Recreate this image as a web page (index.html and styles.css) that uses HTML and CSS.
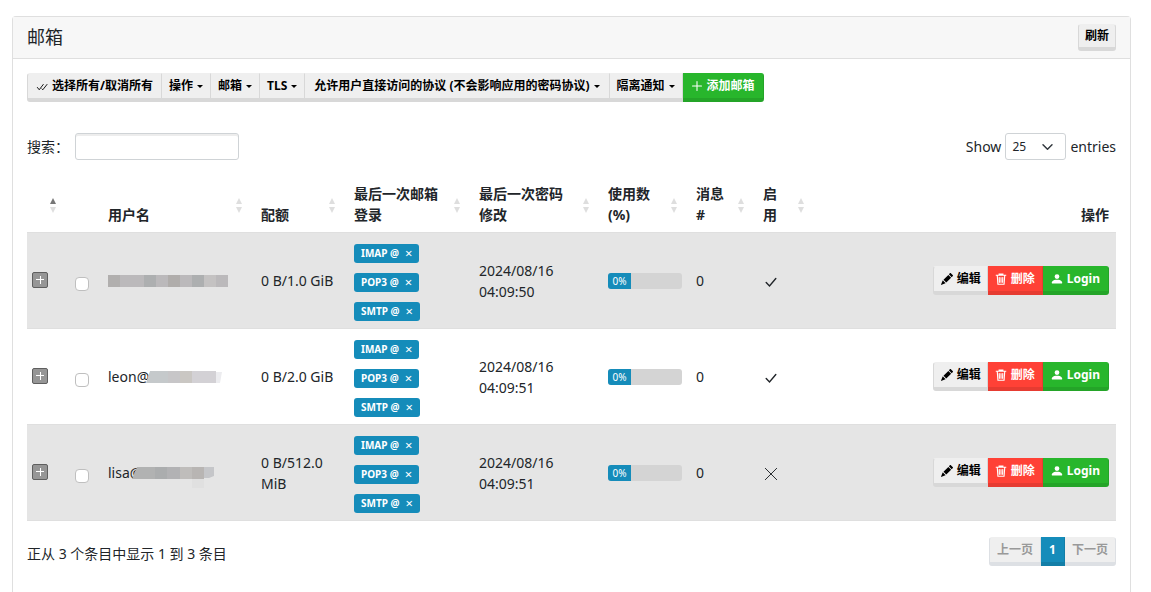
FILE: index.html
```html
<!DOCTYPE html>
<html lang="zh-CN">
<head>
<meta charset="utf-8">
<title>邮箱</title>
<link rel="stylesheet" href="styles.css">
</head>
<body>
<svg class="sprite" aria-hidden="true">
  <symbol id="check-all" viewBox="0 0 16 16"><path d="M1.5 9.5l2.8 3.5L10 5.5M7.5 11.5l1.6 1.5L15 5.5" fill="none" stroke="currentColor" stroke-width="1.2"/></symbol>
  <symbol id="plus" viewBox="0 0 16 16"><path d="M8 2v12M2 8h12" fill="none" stroke="currentColor" stroke-width="1.4" stroke-linecap="round"/></symbol>
  <symbol id="pencil" viewBox="0 0 16 16"><path d="M12.85.15a.5.5 0 0 0-.7 0L10.5 1.8l3.7 3.7 1.65-1.65a.5.5 0 0 0 0-.7zM13.5 6.2L9.8 2.5 3.3 9h.2a.5.5 0 0 1 .5.5v.5h.5a.5.5 0 0 1 .5.5v.5h.5a.5.5 0 0 1 .5.5v.5h.5a.5.5 0 0 1 .5.5v.2zM6 13.7a.5.5 0 0 1 0-.2V13h-.5a.5.5 0 0 1-.5-.5V12h-.5a.5.5 0 0 1-.5-.5V11h-.5a.5.5 0 0 1-.5-.5V10h-.5a.5.5 0 0 1-.2 0l-.1.1-2 5a.5.5 0 0 0 .7.7l5-2z" fill="currentColor"/></symbol>
  <symbol id="trash" viewBox="0 0 16 16"><path d="M1 3h14M5.5 2.5v-1h5v1M3 3l.9 12h8.2L13 3M5.6 5.5l.3 7.5M8 5.5V13M10.4 5.5l-.3 7.5" fill="none" stroke="currentColor" stroke-width="1.5"/></symbol>
  <symbol id="person" viewBox="0 0 16 16"><path d="M2 14s-1 0-1-1 1-4 7-4 7 3 7 4-1 1-1 1zM8 8a3.2 3.2 0 1 0 0-6.4A3.2 3.2 0 0 0 8 8z" fill="currentColor"/></symbol>
  <symbol id="check" viewBox="0 0 16 16"><path d="M2.5 8.5l3.8 4L13.5 4" fill="none" stroke="currentColor" stroke-width="1.6" stroke-linecap="round"/></symbol>
  <symbol id="cross" viewBox="0 0 16 16"><path d="M1.5 1.5l13 13M14.5 1.5l-13 13" fill="none" stroke="currentColor" stroke-width="1.1" stroke-linecap="round"/></symbol>
</svg>
<main class="card">
  <header class="card-header">
    <h1 class="title">邮箱</h1>
    <button class="btn btn-small" type="button">刷新</button>
  </header>
  <div class="card-body">
    <div class="group">
      <button class="btn select-all" type="button"><svg class="icon"><use href="#check-all"/></svg>选择所有/取消所有</button>
      <button class="btn drop" type="button">操作</button>
      <button class="btn drop" type="button">邮箱</button>
      <button class="btn drop" type="button">TLS</button>
      <button class="btn drop wide" type="button">允许用户直接访问的协议 (不会影响应用的密码协议)</button>
      <button class="btn drop" type="button">隔离通知</button>
      <button class="btn success" type="button"><svg class="icon"><use href="#plus"/></svg>添加邮箱</button>
    </div>
    <div class="filters">
      <label class="search">搜索：<input class="field" type="search"></label>
      <label class="length">Show <select class="select"><option>25</option><option>50</option></select> entries</label>
    </div>
    <table class="table">
      <colgroup>
        <col class="c-toggle"><col class="c-check"><col class="c-user"><col class="c-quota"><col class="c-login"><col class="c-pass"><col class="c-use"><col class="c-msg"><col class="c-active"><col>
      </colgroup>
      <thead>
        <tr>
          <th class="sort asc"></th><th></th><th class="sort">用户名</th><th class="sort">配额</th><th class="sort">最后一次邮箱登录</th><th class="sort">最后一次密码修改</th><th class="sort">使用数 (%)</th><th class="sort">消息 #</th><th class="sort">启用</th><th class="end">操作</th>
        </tr>
      </thead>
      <tbody>
        <tr>
          <td class="toggle-cell"><button class="toggle" type="button" aria-label="展开"></button></td>
          <td><input class="check" type="checkbox" aria-label="选择"></td>
          <td><svg class="mask" width="120" height="12"><path fill="#b1afae" d="M0 0h12v12H0z"/><path fill="#bbb9bb" d="M12 0h24v12H12zM48 0h12v12H48zM72 0h12v12H72zM108 0h12v12h-12z"/><path fill="#adafb0" d="M36 0h12v12H36zM84 0h12v12H84z"/><path fill="#b0adab" d="M60 0h12v12H60z"/><path fill="#c4c2c2" d="M96 0h12v12H96z"/></svg></td>
          <td>0 B/1.0 GiB</td>
          <td><div class="badges"><a class="badge" href="#">IMAP @ <span class="x">×</span></a><a class="badge" href="#">POP3 @ <span class="x">×</span></a><a class="badge" href="#">SMTP @ <span class="x">×</span></a></div></td>
          <td>2024/08/16 04:09:50</td>
          <td><div class="progress"><div class="bar">0%</div></div></td>
          <td>0</td>
          <td><svg class="state"><use href="#check"/></svg></td>
          <td><div class="group actions"><a class="btn" href="#"><svg class="icon"><use href="#pencil"/></svg>编辑</a><a class="btn danger" href="#"><svg class="icon"><use href="#trash"/></svg>删除</a><a class="btn success" href="#"><svg class="icon"><use href="#person"/></svg>Login</a></div></td>
        </tr>
        <tr>
          <td class="toggle-cell"><button class="toggle" type="button" aria-label="展开"></button></td>
          <td><input class="check" type="checkbox" aria-label="选择"></td>
          <td><div class="user">leon@<svg class="mask after-leon" width="76" height="12"><path fill="#c5c9cb" d="M4 0h18v12H0z"/><path fill="#c7c6c8" d="M22 0h12v12H22z"/><path fill="#cac7c3" d="M34 0h12v12H34z"/><path fill="#d3d1d5" d="M46 0h24v12H46z"/><path fill="#ececef" d="M70 1h6l-2 11h-4z"/></svg></div></td>
          <td>0 B/2.0 GiB</td>
          <td><div class="badges"><a class="badge" href="#">IMAP @ <span class="x">×</span></a><a class="badge" href="#">POP3 @ <span class="x">×</span></a><a class="badge" href="#">SMTP @ <span class="x">×</span></a></div></td>
          <td>2024/08/16 04:09:51</td>
          <td><div class="progress"><div class="bar">0%</div></div></td>
          <td>0</td>
          <td><svg class="state"><use href="#check"/></svg></td>
          <td><div class="group actions"><a class="btn" href="#"><svg class="icon"><use href="#pencil"/></svg>编辑</a><a class="btn danger" href="#"><svg class="icon"><use href="#trash"/></svg>删除</a><a class="btn success" href="#"><svg class="icon"><use href="#person"/></svg>Login</a></div></td>
        </tr>
        <tr>
          <td class="toggle-cell"><button class="toggle" type="button" aria-label="展开"></button></td>
          <td><input class="check" type="checkbox" aria-label="选择"></td>
          <td><div class="user">lisa@<svg class="mask after-lisa" width="82" height="12"><path fill="#b1b2b2" d="M5 0h18v12H0z"/><path fill="#abadae" d="M23 0h12v12H23z"/><path fill="#b2b2b4" d="M35 0h13v12H35z"/><path fill="#bfbdbb" d="M48 0h12v12H48z"/><path fill="#b8b5b3" d="M60 0h12v12H60z"/><path fill="#c5c6c9" d="M72 0h10v9l-5 2h-5z"/><path fill="#e0e0e0" d="M60 12h12v9H60z"/></svg></div></td>
          <td>0 B/512.0 MiB</td>
          <td><div class="badges"><a class="badge" href="#">IMAP @ <span class="x">×</span></a><a class="badge" href="#">POP3 @ <span class="x">×</span></a><a class="badge" href="#">SMTP @ <span class="x">×</span></a></div></td>
          <td>2024/08/16 04:09:51</td>
          <td><div class="progress"><div class="bar">0%</div></div></td>
          <td>0</td>
          <td><svg class="state"><use href="#cross"/></svg></td>
          <td><div class="group actions"><a class="btn" href="#"><svg class="icon"><use href="#pencil"/></svg>编辑</a><a class="btn danger" href="#"><svg class="icon"><use href="#trash"/></svg>删除</a><a class="btn success" href="#"><svg class="icon"><use href="#person"/></svg>Login</a></div></td>
        </tr>
      </tbody>
    </table>
    <footer class="foot">
      <div>正从 3 个条目中显示 1 到 3 条目</div>
      <nav class="group pages"><button class="btn page" type="button" disabled>上一页</button><button class="btn current" type="button">1</button><button class="btn page" type="button" disabled>下一页</button></nav>
    </footer>
  </div>
</main>
</body>
</html>
```
FILE: styles.css
```css
* { box-sizing: border-box; }
body {
  margin: 0;
  padding: 16px 20px 0 12px;
  min-height: 100vh;
  display: flex;
  flex-direction: column;
  background: #fff;
  color: #212529;
  font: 14px/21px "Noto Sans", "Noto Sans CJK SC", sans-serif;
}
button, input, select { font-family: inherit; color: inherit; margin: 0; }
.sprite { position: absolute; width: 0; height: 0; }
.card {
  flex: 1;
  border: 1px solid #dfdfdf;
  border-bottom: 0;
  border-radius: 4px 4px 0 0;
}
.card-header {
  display: flex;
  align-items: center;
  justify-content: space-between;
  padding: 7px 14px;
  background: #f7f7f7;
  border-bottom: 1px solid #dfdfdf;
}
.title { margin: 0; font-size: 18px; line-height: 27px; font-weight: 400; }
.card-body { padding: 14px 14px 24px; }
.btn {
  display: inline-flex;
  align-items: center;
  justify-content: center;
  height: 29px;
  padding: 0 7px;
  border: 1px solid #d8d8d8;
  border-top-color: #efefef;
  border-bottom: 4px solid #d8d8d8;
  border-radius: 3px;
  background: #efefef;
  color: #000;
  font-size: 12px;
  line-height: 18px;
  font-weight: 700;
  text-decoration: none;
  white-space: nowrap;
}
.btn-small { height: 27px; padding: 0 6px; }
.group { display: flex; }
.group .btn { border-radius: 0; }
.group .btn + .btn { border-left-width: 0; }
.group .btn:first-child { border-radius: 3px 0 0 3px; }
.group .btn:last-child { border-radius: 0 3px 3px 0; }
.group .select-all { padding: 0 8px; }
.group .drop { padding: 0 7px; }
.group .wide { padding: 0 9px; }
.drop::after {
  content: "";
  margin-left: 4px;
  border: 3px solid transparent;
  border-top-color: currentColor;
  border-bottom: 0;
}
.group .success { background: #28b62c; border-color: #28b62c #24a428 #24a428; color: #fff; padding: 0 8px; }
.group .danger { background: #ff4136; border-color: #ff4136 #e63b31 #e63b31; color: #fff; }
.group .current { background: #158cba; border-color: #158cba #137ea7 #137ea7; color: #fff; padding: 0 8px; }
.icon { width: 12px; height: 12px; margin-right: 4px; flex: none; }
.filters {
  display: flex;
  align-items: center;
  justify-content: space-between;
  margin: 31px 0 17px;
}
.search, .length { display: flex; align-items: center; }
.search { gap: 6px; }
.length { gap: 4px; }
.field {
  width: 164px;
  height: 27px;
  border: 1px solid #cfd3d6;
  border-radius: 3px;
  background: #fff;
  box-shadow: inset 0 2px 0 rgba(0, 0, 0, 0.07);
}
.select {
  width: 61px;
  height: 27px;
  padding: 0 6px;
  border: 1px solid #cfd3d6;
  border-radius: 3px;
  font-size: 12px;
  appearance: none;
  background: #fff url("data:image/svg+xml,%3Csvg xmlns='http://www.w3.org/2000/svg' viewBox='0 0 16 16'%3E%3Cpath fill='none' stroke='%23343a40' stroke-width='2' stroke-linecap='round' stroke-linejoin='round' d='m2 5 6 6 6-6'/%3E%3C/svg%3E") no-repeat right 11px center / 13px 12px;
}
.table { width: 100%; table-layout: fixed; border-collapse: separate; border-spacing: 0; }
.c-toggle { width: 41px; }
.c-check { width: 33px; }
.c-user { width: 153px; }
.c-quota { width: 93px; }
.c-login { width: 125px; }
.c-pass { width: 129px; }
.c-use { width: 88px; }
.c-msg { width: 67px; }
.c-active { width: 60px; }
th, td { padding: 7px; text-align: left; border-bottom: 1px solid #dfdfdf; }
th { vertical-align: bottom; font-weight: 700; padding-top: 6px; }
th.sort { padding-right: 30px; position: relative; }
.sort::before, .sort::after {
  content: "";
  position: absolute;
  right: 12px;
  border: 3px solid transparent;
}
.sort::before { top: 21px; border-top: 0; border-bottom: 6px solid #dedede; }
.sort::after { top: 30px; border-bottom: 0; border-top: 6px solid #dedede; }
.asc::before { border-bottom-color: #777; }
th.end { text-align: right; }
td { vertical-align: middle; }
tbody tr:nth-child(odd) { background: #e5e5e5; }
.toggle-cell { padding: 0 5px 2px; }
.toggle {
  display: block;
  width: 16px;
  height: 16px;
  padding: 0;
  border: 1px solid #5f5f5f;
  border-radius: 2px;
  background: linear-gradient(#fff, #fff) center / 8px 1px no-repeat, linear-gradient(#fff, #fff) center / 1px 8px no-repeat, #969696;
}
.check {
  appearance: none;
  display: block;
  width: 14px;
  height: 14px;
  margin-top: 7px;
  border: 1px solid #bfbfbf;
  border-radius: 4px;
  background: #fff;
}
.mask { display: block; flex: none; overflow: visible; }
.user { display: flex; align-items: center; }
.after-leon { margin-left: -3px; }
.after-lisa { margin-left: -10px; }
.badges { display: flex; flex-direction: column; align-items: flex-start; gap: 10px; padding-top: 4px; }
.badge {
  display: flex;
  gap: 6px;
  height: 19px;
  padding: 0 7px;
  border-radius: 3px;
  background: #158cba;
  color: #fff;
  font-size: 10px;
  line-height: 18px;
  font-weight: 700;
  text-decoration: none;
  white-space: nowrap;
}
.x { font-size: 13px; font-weight: 400; }
.progress { display: flex; height: 16px; border-radius: 3px; background: #d4d4d4; overflow: hidden; }
.bar { min-width: 23px; background: #158cba; color: #fff; font-size: 10px; line-height: 16px; text-align: center; }
.state { display: block; width: 14px; height: 14px; margin: 2px 1px 0; }
.actions { justify-content: flex-end; padding-bottom: 1px; }
.actions .btn:first-child { padding: 0 6px 0 7px; }
.foot { display: flex; align-items: center; justify-content: space-between; padding-top: 16px; }
.foot > div { padding-top: 3px; }
.pages .page { color: #999; border-color: #efefef #dde0e4 #dde0e4; }
```
